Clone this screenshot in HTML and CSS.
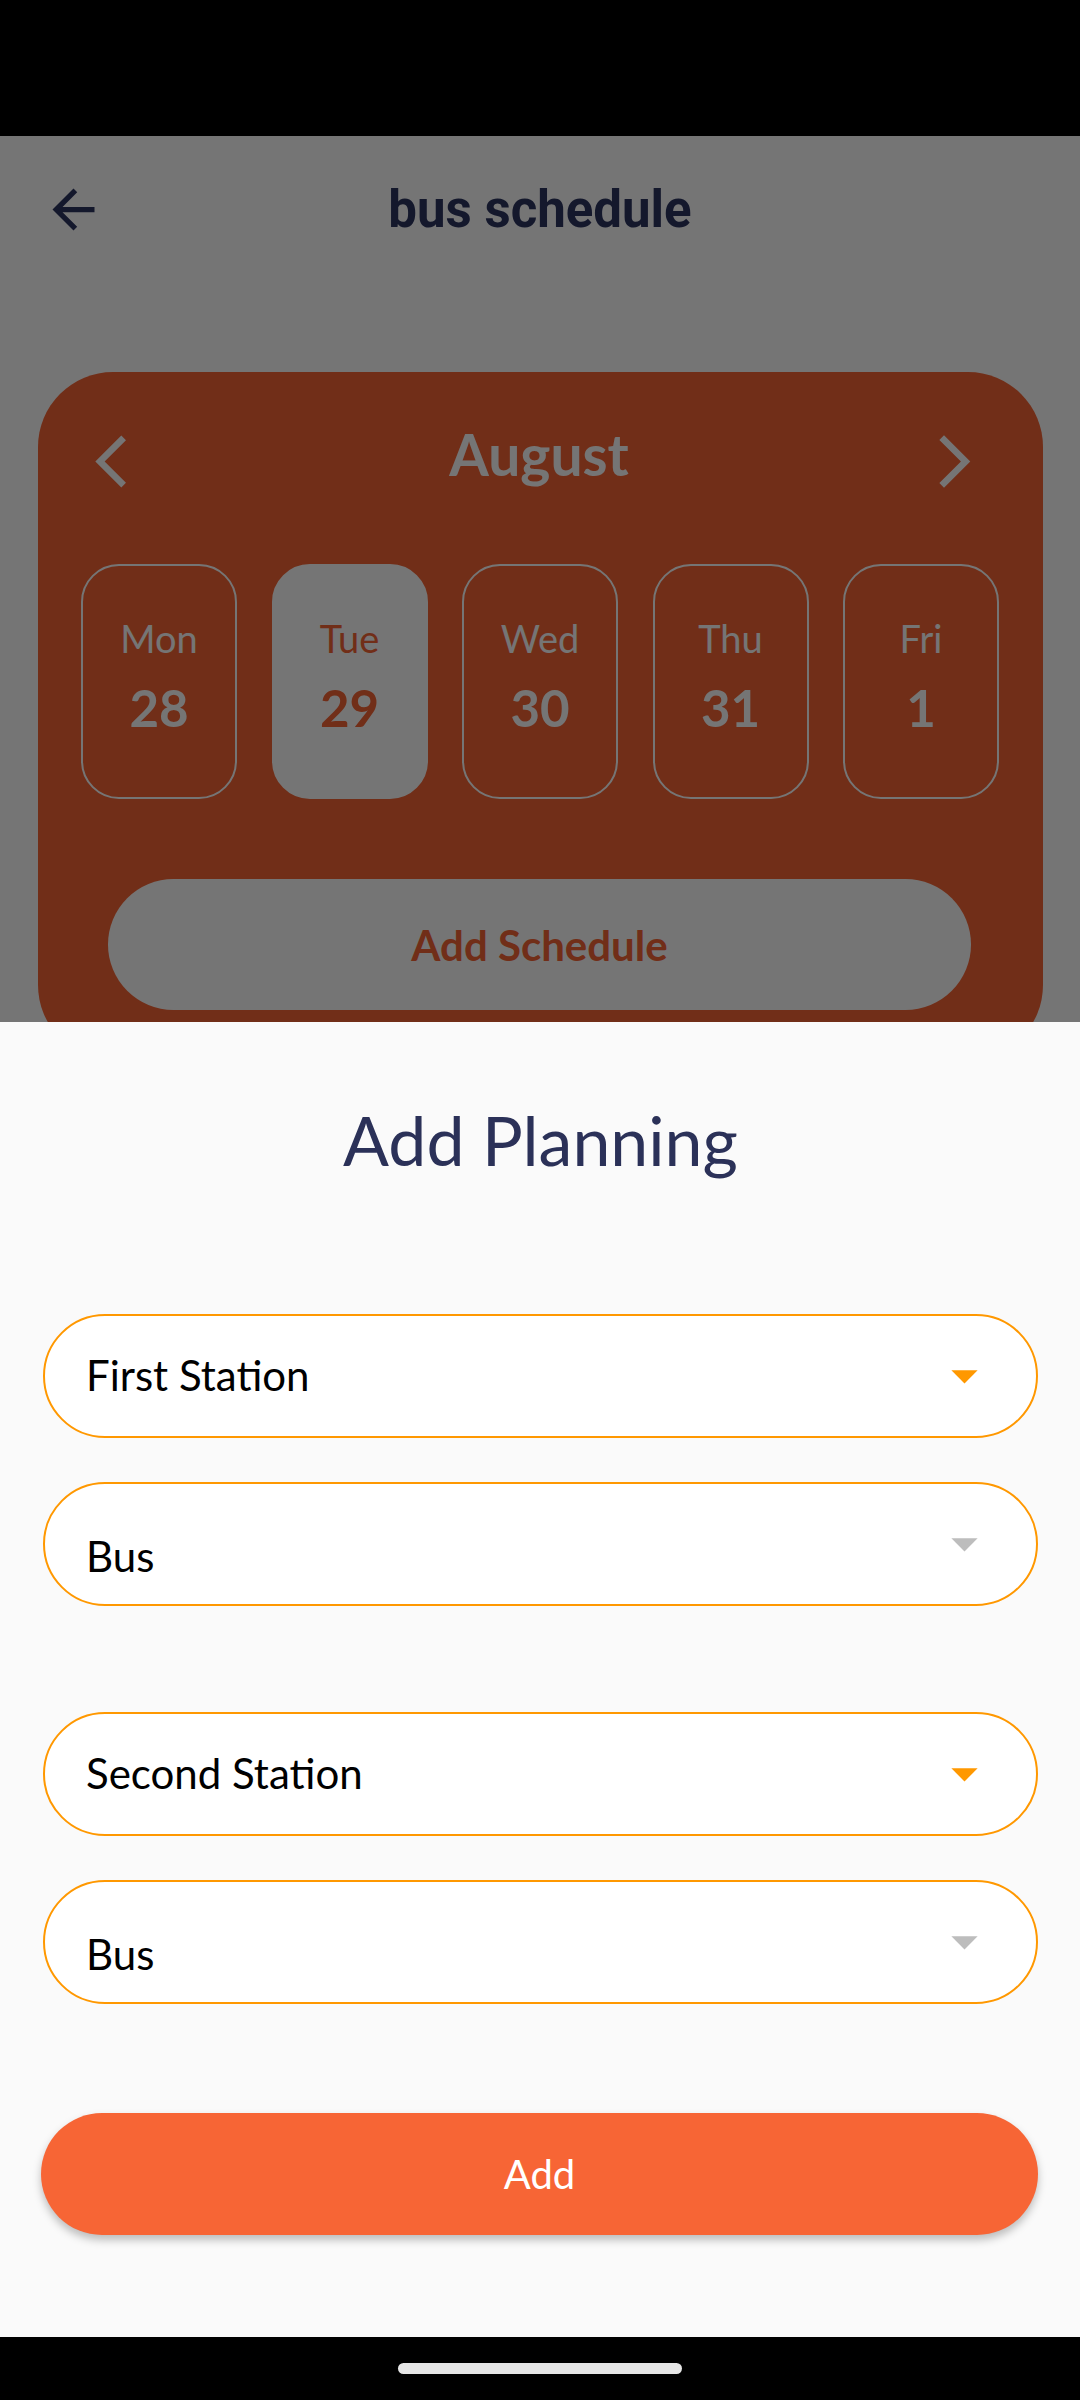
FILE: index.html
```html
<!DOCTYPE html>
<html lang="en">
<head>
<meta charset="utf-8">
<title>bus schedule</title>
<link rel="stylesheet" href="styles.css">
</head>
<body>
<div class="screen">
  <div class="status-bar"></div>
  <header class="appbar">
    <button class="icon-btn" aria-label="Back">
      <svg viewBox="0 0 24 24"><path d="M20 11H7.83l5.59-5.59L12 4l-8 8 8 8 1.41-1.41L7.83 13H20v-2z"/></svg>
    </button>
    <h1 class="appbar-title">bus schedule</h1>
    <span></span>
  </header>
  <section class="calendar-card">
    <div class="month-row">
      <svg class="chev" viewBox="0 0 24 24"><path d="M17.51 3.87L15.73 2.1 5.84 12l9.9 9.9 1.77-1.77L9.38 12l8.13-8.13z"/></svg>
      <span class="month">August</span>
      <svg class="chev" viewBox="0 0 24 24"><path d="M6.23 20.23L8 22l10-10L8 2 6.23 3.77 14.46 12z"/></svg>
    </div>
    <div class="days">
      <div class="day"><span class="dname">Mon</span><span class="dnum">28</span></div>
      <div class="day selected"><span class="dname">Tue</span><span class="dnum">29</span></div>
      <div class="day"><span class="dname">Wed</span><span class="dnum">30</span></div>
      <div class="day"><span class="dname">Thu</span><span class="dnum">31</span></div>
      <div class="day"><span class="dname">Fri</span><span class="dnum">1</span></div>
    </div>
    <button class="add-schedule">Add Schedule</button>
  </section>
</div>
<div class="scrim"></div>
<section class="sheet">
  <h2 class="sheet-title">Add Planning</h2>
  <div class="fields">
    <div class="group">
      <div class="dropdown">
        <span class="dd-label">First Station</span>
        <svg class="dd-arrow active" viewBox="0 0 24 24"><path d="M7 10l5 5 5-5z"/></svg>
      </div>
      <div class="dropdown hint">
        <span class="dd-label">Bus</span>
        <svg class="dd-arrow disabled" viewBox="0 0 24 24"><path d="M7 10l5 5 5-5z"/></svg>
      </div>
    </div>
    <div class="group">
      <div class="dropdown">
        <span class="dd-label">Second Station</span>
        <svg class="dd-arrow active" viewBox="0 0 24 24"><path d="M7 10l5 5 5-5z"/></svg>
      </div>
      <div class="dropdown hint">
        <span class="dd-label">Bus</span>
        <svg class="dd-arrow disabled" viewBox="0 0 24 24"><path d="M7 10l5 5 5-5z"/></svg>
      </div>
    </div>
  </div>
  <button class="add-btn">Add</button>
</section>
<div class="nav-bar"><span class="nav-pill"></span></div>
</body>
</html>
```

FILE: styles.css
```css
* { box-sizing: border-box; margin: 0; padding: 0; }
html, body { width: 1080px; height: 2400px; }
body {
  background: #ffffff;
  font-family: Lato, "Noto Sans", sans-serif;
  overflow: hidden;
  position: relative;
}
.screen { display: flex; flex-direction: column; height: 2400px; }
.status-bar { height: 136px; background: #000; flex: none; }

.appbar {
  height: 147px;
  display: grid;
  grid-template-columns: 1fr auto 1fr;
  align-items: center;
  flex: none;
}
.icon-btn {
  background: none; border: 0;
  width: 63px; height: 63px;
  margin-left: 42px;
  display: flex;
}
.icon-btn svg { width: 63px; height: 63px; fill: #2d3560; }
.appbar-title {
  font-family: Roboto, "Noto Sans", sans-serif;
  font-weight: 700;
  font-size: 51px;
  line-height: 1.2;
  color: #2d3560;
}

.calendar-card {
  margin: 89px 37px 0 38px;
  height: 688px;
  border-radius: 75px;
  background: #f76535;
  padding-top: 58px;
  display: flex;
  flex-direction: column;
  flex: none;
}
.month-row {
  display: flex;
  align-items: center;
  justify-content: space-between;
  height: 63px;
  padding: 0 57px 0 42px;
}
.chev { width: 63px; height: 63px; fill: #fff; }
.month {
  font-size: 57px;
  font-weight: 700;
  color: #fff;
  line-height: 1.2;
  margin: 0 0 14px 12px;
}
.days {
  display: flex;
  justify-content: space-between;
  margin: 71px 44px 0 43px;
}
.day {
  width: 156px;
  height: 235px;
  border: 2px solid #fff;
  border-radius: 38px;
  display: flex;
  flex-direction: column;
  align-items: center;
  padding-top: 50px;
  gap: 15px;
  color: #fff;
}
.day.selected { background: #fff; color: #f76535; }
.dname { font-size: 38px; line-height: 1.2; }
.dnum { font-size: 51px; font-weight: 700; line-height: 1.2; }
.add-schedule {
  margin: 80px 72px 0 70px;
  height: 131px;
  border-radius: 66px;
  background: #fff;
  color: #f76535;
  border: 0;
  font-family: inherit;
  font-size: 42px;
  font-weight: 700;
}

.scrim {
  position: fixed;
  inset: 0;
  background: rgba(0, 0, 0, 0.54);
}

.sheet {
  position: absolute;
  left: 0; right: 0;
  top: 1022px;
  height: 1315px;
  background: #fafafa;
  padding: 77px 42px 0 43px;
  display: flex;
  flex-direction: column;
}
.sheet-title {
  font-size: 68px;
  font-weight: 400;
  color: #2b3158;
  text-align: center;
  line-height: 1.2;
}
.fields {
  margin-top: 133px;
  display: flex;
  flex-direction: column;
  gap: 106px;
}
.group { display: flex; flex-direction: column; gap: 44px; }
.dropdown {
  height: 124px;
  border: 2px solid #ff9800;
  border-radius: 62px;
  background: #fff;
  display: flex;
  align-items: center;
  justify-content: space-between;
  padding: 0 40px 0 41px;
}
.dd-label { font-size: 42px; line-height: 1.2; color: #000; }
.dropdown.hint .dd-label { padding-top: 26px; }
.dd-arrow { width: 63px; height: 63px; }
.dd-arrow.active { fill: #ff9800; }
.dd-arrow.disabled { fill: #bdbdbd; }

.add-btn {
  margin: 109px 0 0 -2px;
  height: 122px;
  border-radius: 61px;
  background: #f76535;
  color: #fff;
  border: 0;
  font-family: inherit;
  font-size: 40px;
  font-weight: 400;
  box-shadow: 0 5px 8px rgba(0, 0, 0, 0.25);
}

.nav-bar {
  position: fixed;
  left: 0; right: 0; bottom: 0;
  height: 63px;
  background: #000;
  display: flex;
  align-items: center;
  justify-content: center;
}
.nav-pill {
  width: 284px;
  height: 11px;
  border-radius: 6px;
  background: #e6e6e6;
}
```
